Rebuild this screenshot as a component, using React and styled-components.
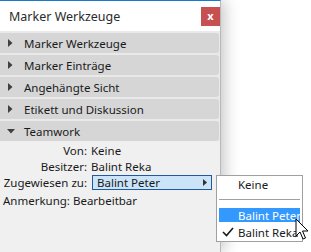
import React from 'react';
import styled, { createGlobalStyle } from 'styled-components';

const Global = createGlobalStyle`
  html, body {
    margin: 0;
    padding: 0;
    background: #ffffff;
    font-family: "Noto Sans", "Liberation Sans", sans-serif;
  }
`;

const Screen = styled.div`
  position: relative;
  width: 311px;
  height: 252px;
  overflow: hidden;
`;

const Window = styled.div`
  width: 221px;
  height: 252px;
  display: flex;
  flex-direction: column;
  background: #f0f0f0;
  border-top: 1px solid #1979ca;
  border-right: 1px solid #b9b9b9;
  box-sizing: border-box;
  box-shadow: 4px 0 14px rgba(0, 0, 0, 0.22);
`;

const TitleBar = styled.div`
  height: 30px;
  display: flex;
  align-items: center;
  justify-content: space-between;
  background: #ffffff;
  padding: 0 0 0 9px;
`;

const Title = styled.div`
  font-size: 12.5px;
  color: #2b2b2b;
`;

const CloseBtn = styled.div`
  width: 19px;
  height: 19px;
  background: #c75050;
  color: #ffffff;
  font-size: 11px;
  font-weight: bold;
  display: flex;
  align-items: center;
  justify-content: center;
  line-height: 1;
  padding-bottom: 1px;
  box-sizing: border-box;
`;

const Sections = styled.div`
  display: flex;
  flex-direction: column;
  gap: 2px;
  padding-top: 2px;
  background: #e9e9e9;
`;

const Header = styled.div`
  height: 20px;
  display: flex;
  align-items: center;
  background: #d6d6d6;
  border-radius: 0 3px 3px 0;
  margin-right: 1px;
  font-size: 11.5px;
  color: #1a1a1a;
`;

const Arrow = styled.span`
  width: 24px;
  display: flex;
  justify-content: center;
  padding-right: 3px;
  box-sizing: border-box;
  svg { display: block; }
`;

const Content = styled.div`
  flex: 1;
  background: #f0f0f0;
  padding-top: 1px;
  font-size: 11.5px;
  color: #1a1a1a;
`;

const Row = styled.div`
  display: flex;
  align-items: center;
  height: ${p => p.h || 16}px;
`;

const Label = styled.span`
  width: 91px;
  text-align: right;
  padding-right: 4px;
  box-sizing: border-box;
  flex-shrink: 0;
`;

const Note = styled.span`
  padding-left: 3px;
`;

const Select = styled.div`
  width: 120px;
  height: 15px;
  margin-left: 1px;
  display: flex;
  align-items: center;
  justify-content: space-between;
  background: #cce4f7;
  border: 1px solid #1f5aa0;
  box-sizing: border-box;
  padding: 0 4px 0 4px;
  font-size: 11.5px;
`;

const Menu = styled.div`
  position: absolute;
  left: 216px;
  top: 175px;
  width: 87px;
  height: 67px;
  background: #ffffff;
  border: 1px solid #a0a0a0;
  box-sizing: border-box;
  padding: 1px 2px 2px 2px;
  display: flex;
  flex-direction: column;
  font-size: 11.5px;
  color: #1a1a1a;
  overflow: hidden;
`;

const Item = styled.div`
  height: 14px;
  flex-shrink: 0;
  display: flex;
  align-items: center;
  white-space: nowrap;
  padding-left: 3px;
  margin-top: ${p => p.mt || 0}px;
  background: ${p => (p.active ? '#3399ff' : 'transparent')};
  color: ${p => (p.active ? '#ffffff' : '#1a1a1a')};
`;

const Check = styled.span`
  width: 16px;
  flex-shrink: 0;
  display: flex;
  align-items: center;
  svg { display: block; }
`;

const Sep = styled.div`
  height: 1px;
  flex-shrink: 0;
  margin: 8px 0 0 0;
  background: #a0a0a0;
`;

const Cursor = styled.svg`
  position: absolute;
  left: 295px;
  top: 218px;
`;

const sections = ['Marker Werkzeuge', 'Marker Einträge', 'Angehängte Sicht', 'Etikett und Diskussion'];

function Tri({ open }) {
  return open ? (
    <svg width="8" height="5" viewBox="0 0 8 5"><path d="M0 0 L8 0 L4 4.5 Z" fill="#404040" /></svg>
  ) : (
    <svg width="5" height="8" viewBox="0 0 5 8"><path d="M0 0 L4.5 4 L0 8 Z" fill="#404040" /></svg>
  );
}

export default function App() {
  return (
    <Screen>
      <Global />
      <Window>
        <TitleBar>
          <Title>Marker Werkzeuge</Title>
          <CloseBtn>x</CloseBtn>
        </TitleBar>
        <Sections>
          {sections.map(s => (
            <Header key={s}>
              <Arrow><Tri /></Arrow>
              {s}
            </Header>
          ))}
          <Header>
            <Arrow><Tri open /></Arrow>
            Teamwork
          </Header>
        </Sections>
        <Content>
          <Row><Label>Von:</Label>Keine</Row>
          <Row><Label>Besitzer:</Label>Balint Reka</Row>
          <Row h={17}>
            <Label>Zugewiesen zu:</Label>
            <Select>
              Balint Peter
              <svg width="4" height="7" viewBox="0 0 4 7"><path d="M0 0 L4 3.5 L0 7 Z" fill="#333" /></svg>
            </Select>
          </Row>
          <Row h={18}><Note>Anmerkung: Bearbeitbar</Note></Row>
        </Content>
      </Window>
      <Menu>
        <Item><Check />Keine</Item>
        <Sep />
        <Item mt={8} active><Check />Balint Peter</Item>
        <Item mt={3}>
          <Check>
            <svg width="12" height="10" viewBox="0 0 12 10"><path d="M1 5 L4.5 8.5 L11 1" fill="none" stroke="#1a1a1a" strokeWidth="1.6" /></svg>
          </Check>
          Balint Reka
        </Item>
      </Menu>
      <Cursor width="14" height="24" viewBox="0 0 14 24">
        <path d="M1 1 L1 18 L5 14 L8 21 L10.5 20 L7.5 13 L13 13 Z" fill="#ffffff" stroke="#000000" strokeWidth="1" strokeLinejoin="round" />
      </Cursor>
    </Screen>
  );
}
